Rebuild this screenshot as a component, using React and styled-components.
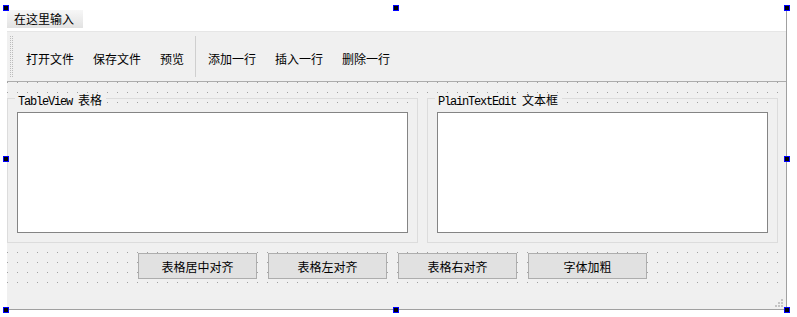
import React from 'react';
import styled, { createGlobalStyle } from 'styled-components';

const GlobalStyle = createGlobalStyle`
  html, body {
    margin: 0;
    padding: 0;
    background: #ffffff;
  }
  body {
    font-family: "Noto Sans CJK SC", "Noto Sans", sans-serif;
    font-size: 12px;
    color: #000;
  }
`;

const Stage = styled.div`
  position: relative;
  width: 797px;
  height: 317px;
  padding: 8px 0 0 7px;
  box-sizing: border-box;
`;

const Form = styled.div`
  width: 780px;
  height: 302px;
  box-sizing: border-box;
  border-right: 1px solid #a0a0a0;
  border-bottom: 1px solid #a0a0a0;
  display: flex;
  flex-direction: column;
`;

const MenuBar = styled.div`
  height: 24px;
  box-sizing: border-box;
  padding-top: 2px;
  background: #ffffff;
  border-bottom: 1px solid #e6e6e6;
`;

const MenuPlaceholder = styled.div`
  width: 76px;
  height: 18px;
  box-sizing: border-box;
  padding-left: 7px;
  line-height: 18px;
  background: linear-gradient(to bottom, #f7f7f7, #e2e2e2);
  white-space: nowrap;
`;

const ToolBar = styled.div`
  height: 50px;
  box-sizing: border-box;
  display: flex;
  align-items: center;
  padding-left: 3px;
  background: #f0f0f0;
  border-bottom: 1px solid #acacac;
`;

const Grip = styled.div`
  width: 3px;
  height: 41px;
  margin-right: 3px;
  background-image: conic-gradient(from 270deg at 1px 1px, #bdbdbd 90deg, transparent 0);
  background-size: 2px 2px;
`;

const ToolButton = styled.span`
  padding: 3px 9px 0 10px;
  white-space: nowrap;
`;

const Separator = styled.div`
  width: 1px;
  height: 41px;
  margin: 0 2px 0 2px;
  background: #cfcfcf;
`;

const Central = styled.div`
  height: 207px;
  box-sizing: border-box;
  padding-top: 10px;
  background-color: #f0f0f0;
  background-image: conic-gradient(from 270deg at 1px 1px, #a0a0a0 90deg, transparent 0);
  background-size: 10px 10px;
`;

const GroupRow = styled.div`
  display: flex;
  gap: 9px;
`;

const GroupFrame = styled.div`
  position: relative;
  width: ${(p) => p.$w}px;
  height: 145px;
  margin-top: 6px;
  box-sizing: border-box;
  padding: 13px 9px 9px;
  border: 1px solid #dcdcdc;
  display: flex;
`;

const GroupTitle = styled.div`
  position: absolute;
  top: -5px;
  left: 7px;
  height: 11px;
  padding: 0 4px 0 3px;
  line-height: 11px;
  background: #f0f0f0;
  white-space: nowrap;
`;

const Latin = styled.span`
  font-family: "Liberation Mono", "DejaVu Sans Mono", monospace;
  font-size: 12px;
  letter-spacing: -1.2px;
  white-space: pre;
`;

const ViewBox = styled.div`
  flex: 1;
  background: #ffffff;
  border: 1px solid #848484;
`;

const ButtonRow = styled.div`
  display: flex;
  gap: 11px;
  margin-top: 10px;
  padding-left: 131px;
`;

const PushButton = styled.div`
  width: 119px;
  height: 26px;
  box-sizing: border-box;
  display: flex;
  align-items: center;
  justify-content: center;
  background: #e1e1e1;
  border: 1px solid #adadad;
  white-space: nowrap;
`;

const StatusBar = styled.div`
  height: 20px;
  box-sizing: border-box;
  display: flex;
  justify-content: flex-end;
  align-items: flex-end;
  padding: 0 3px 2px 0;
  background: #f0f0f0;
`;

const Handle = styled.div`
  position: absolute;
  left: ${(p) => p.$x}px;
  top: ${(p) => p.$y}px;
  width: 6px;
  height: 6px;
  box-sizing: border-box;
  background: #000;
  border: 1px solid #0000ff;
`;

const SizeGrip = () => (
  <svg width="8" height="8" viewBox="0 0 8 8">
    {[
      [6, 0],
      [3, 3],
      [6, 3],
      [0, 6],
      [3, 6],
      [6, 6]
    ].map(([x, y]) => (
      <rect key={`${x}-${y}`} x={x} y={y} width="2" height="2" fill="#c4c4c4" />
    ))}
  </svg>
);

const handles = [
  [3, 5],
  [393, 5],
  [784, 5],
  [3, 156],
  [784, 156],
  [3, 307],
  [393, 307],
  [784, 307]
];

const App = () => {
  return (
    <Stage>
      <GlobalStyle />
      <Form>
        <MenuBar>
          <MenuPlaceholder>在这里输入</MenuPlaceholder>
        </MenuBar>
        <ToolBar>
          <Grip />
          <ToolButton>打开文件</ToolButton>
          <ToolButton>保存文件</ToolButton>
          <ToolButton>预览</ToolButton>
          <Separator />
          <ToolButton>添加一行</ToolButton>
          <ToolButton>插入一行</ToolButton>
          <ToolButton>删除一行</ToolButton>
        </ToolBar>
        <Central>
          <GroupRow>
            <GroupFrame $w={411}>
              <GroupTitle>
                <Latin>TableView </Latin>表格
              </GroupTitle>
              <ViewBox />
            </GroupFrame>
            <GroupFrame $w={351}>
              <GroupTitle>
                <Latin>PlainTextEdit </Latin>文本框
              </GroupTitle>
              <ViewBox />
            </GroupFrame>
          </GroupRow>
          <ButtonRow>
            <PushButton>表格居中对齐</PushButton>
            <PushButton>表格左对齐</PushButton>
            <PushButton>表格右对齐</PushButton>
            <PushButton>字体加粗</PushButton>
          </ButtonRow>
        </Central>
        <StatusBar>
          <SizeGrip />
        </StatusBar>
      </Form>
      {handles.map(([x, y]) => (
        <Handle key={`${x}-${y}`} $x={x} $y={y} />
      ))}
    </Stage>
  );
};

export default App;
